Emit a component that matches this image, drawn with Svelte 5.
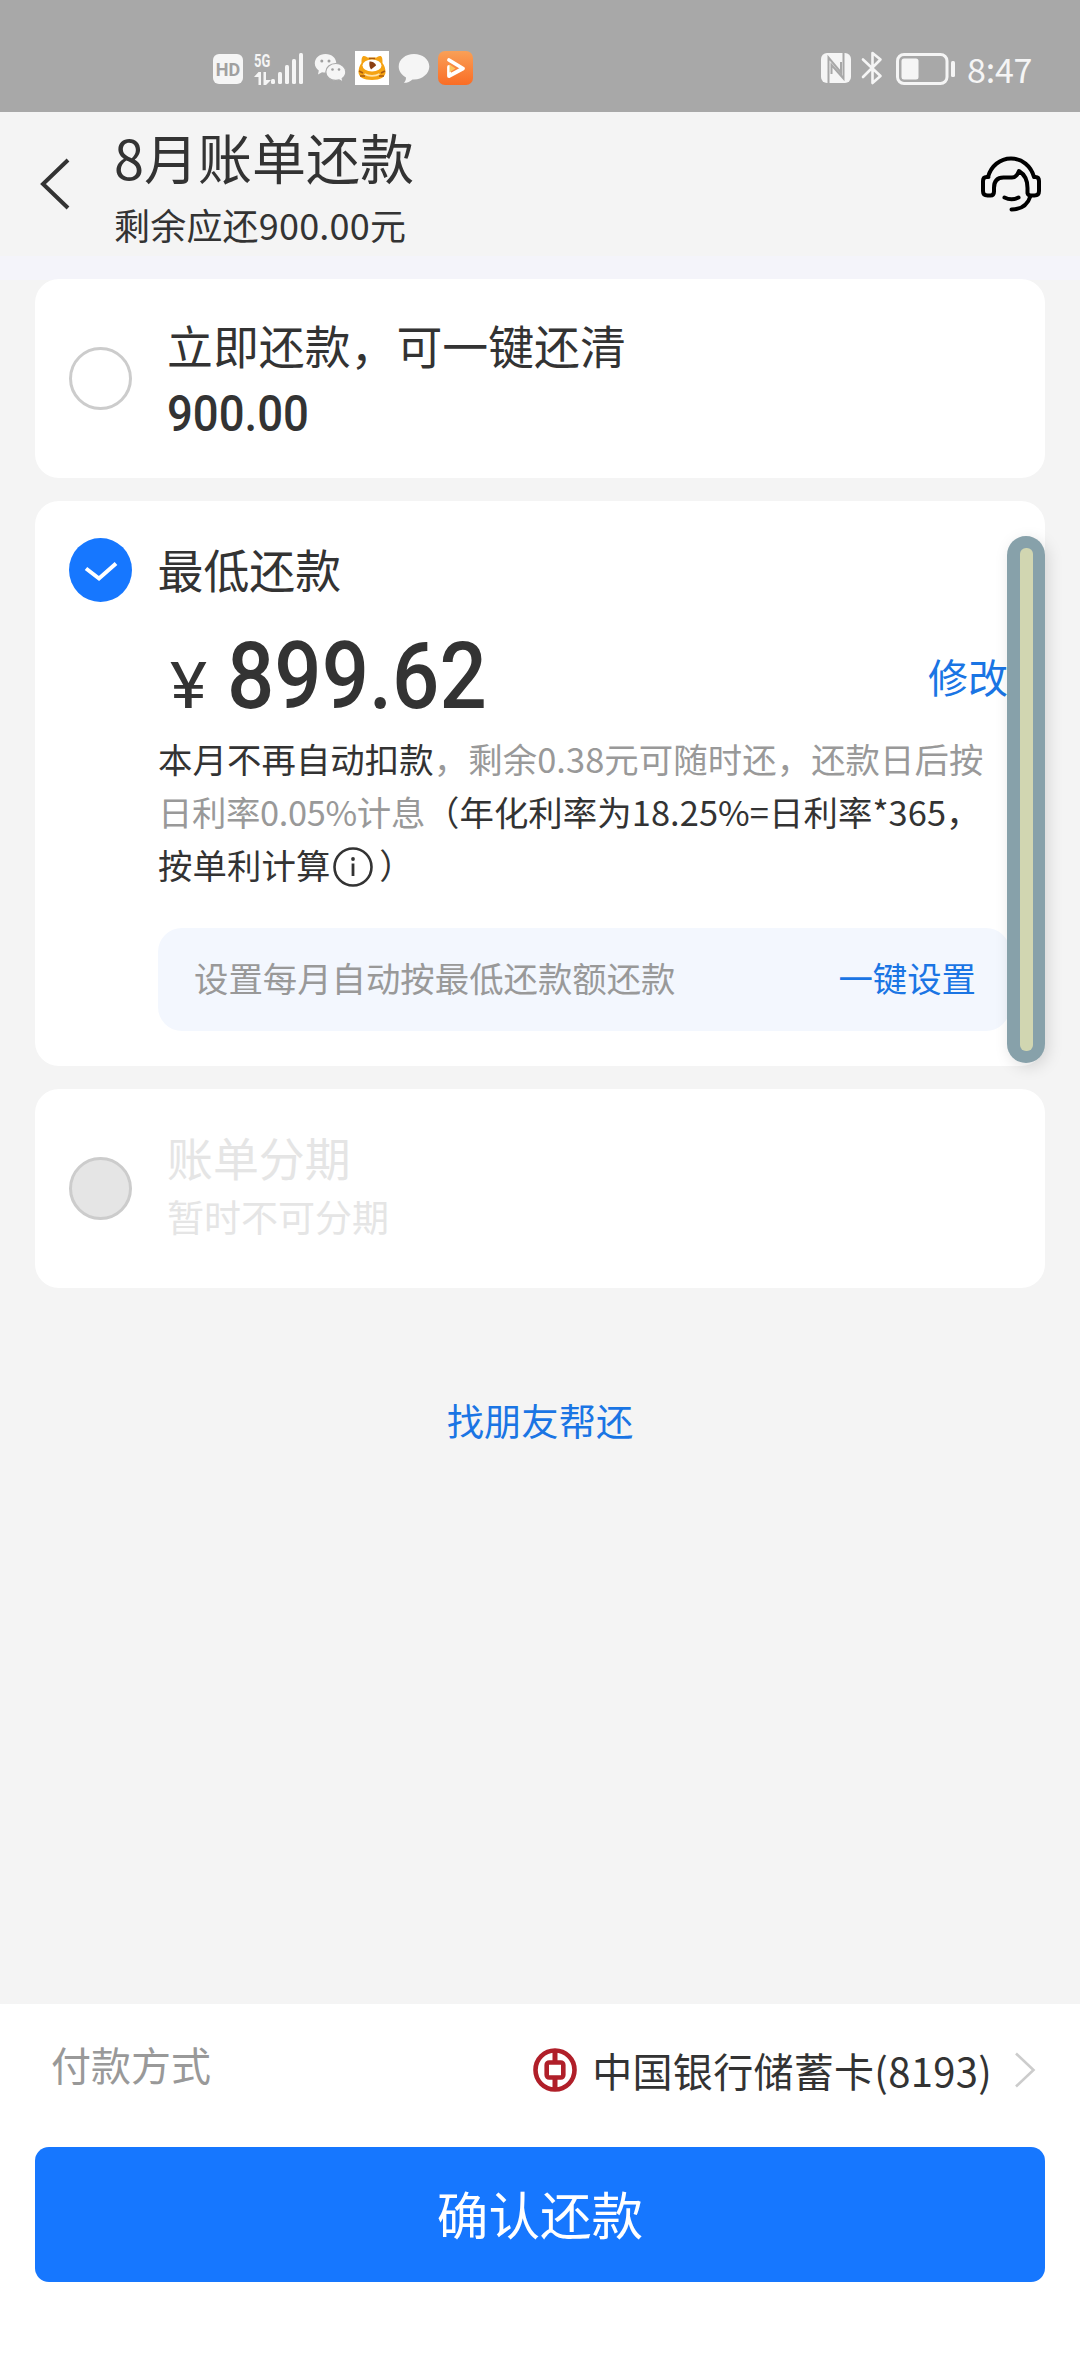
<script lang="ts">
	type Plan = 'full' | 'minimum';

	let selected = $state<Plan>('minimum');

	const bars = [5, 12, 19, 25, 31];
</script>

<svelte:head>
	<title>8月账单还款</title>
</svelte:head>

<div class="page">
	<div class="status">
		<span class="hd">HD</span>
		<div class="network">
			<span>5G</span>
			<svg width="17" height="13" viewBox="0 0 17 13" fill="#f5f5f5">
				<path d="M0 5 4.5 0H7v13H4.500V5zM9.500 0H12v8h5l-5 5H9.500z" />
			</svg>
		</div>
		<div class="bars">
			{#each bars as height}
				<i style="height: {height}px"></i>
			{/each}
		</div>
		<svg class="wechat" width="33" height="30" viewBox="0 0 33 30">
			<path
				d="M11.500 1C5.200 1 .8 5.200.8 10.300c0 3 1.500 5.500 4 7.200L4 21.500l4-2.300c1.200.3 2.300.4 3.500.4 6.300 0 10.800-4.200 10.800-9.300S17.800 1 11.500 1z"
				fill="#f5f5f5"
			/>
			<path
				d="M21.800 10.500c-5.600 0-10 3.700-10 8.400s4.400 8.400 10 8.400c1.200 0 2.300-.1 3.300-.4l4 2.100-.9-3.600c2.200-1.500 3.600-3.800 3.600-6.500 0-4.700-4.400-8.400-10-8.400z"
				fill="#f5f5f5"
				stroke="#a8a8a8"
				stroke-width="1.200"
			/>
			<circle cx="7.800" cy="8" r="1.500" fill="#a0a0a0" />
			<circle cx="15" cy="8" r="1.500" fill="#a0a0a0" />
			<circle cx="18.500" cy="16.500" r="1.300" fill="#a0a0a0" />
			<circle cx="25" cy="16.500" r="1.300" fill="#a0a0a0" />
		</svg>
		<svg class="tiger" width="34" height="34" viewBox="0 0 34 34">
			<rect width="34" height="34" fill="#fff" />
			<path
				d="M6.500 12C6.500 7 7 5 9 5c1.500 0 2.500 1 3.500 1.500h9C22.500 6 23.500 5 25 5c2 0 2.700 2.500 2.500 7 2 2.500 3 6 3 9 0 5-5 8-13.500 8S3.500 26 3.500 21c0-3 1-6.500 3-9z"
				fill="#f5a313"
			/>
			<path d="M14 7.500h6M4 20l4 2M30 20l-4 2M5 25h5M29 25h-5" stroke="#a85a10" stroke-width="1.600" />
			<ellipse cx="17" cy="14.500" rx="9.500" ry="6" fill="#fff" />
			<path d="M14.500 10.500c3 0 6 1.500 6.500 4l-5 4c-1.500-2-2-5-1.500-8z" fill="#8a3f14" />
			<path d="M9.500 23c4 2.500 11 2.500 15 0" fill="none" stroke="#ffe3a8" stroke-width="1.800" />
		</svg>
		<svg class="bubble" width="32" height="31" viewBox="0 0 32 31">
			<path
				d="M16 1C7.500 1 .7 6.500.7 13.500c0 5 3.300 8.800 7.300 10.900 0 2.300-.7 4.200-2.200 5.400 3.500 0 6.700-1.500 8.700-3.400H16c8.500 0 15.300-5.800 15.300-12.900S24.500 1 16 1z"
				fill="#f5f5f5"
			/>
		</svg>
		<svg class="video" width="35" height="34" viewBox="0 0 35 34">
			<defs>
				<linearGradient id="orange" x1="0" y1="0" x2="0" y2="1">
					<stop offset="0" stop-color="#f9a057" />
					<stop offset="1" stop-color="#fa6d25" />
				</linearGradient>
			</defs>
			<rect width="35" height="34" rx="7" fill="url(#orange)" />
			<path d="M11 16v9l14-7.500L11 9" fill="none" stroke="#fff" stroke-width="3.800" stroke-linejoin="round" stroke-linecap="round" />
			<path d="M11.500 13.500l6 4-6 4z" fill="#fbc35f" />
		</svg>

		<svg class="nfc" width="30" height="30" viewBox="0 0 30 30">
			<rect width="30" height="30" rx="6" fill="#f5f5f5" />
			<path
				d="M7.500 30V4.500L20 19.500V9M22.500 0v25.500L10.500 12v9"
				fill="none"
				stroke="#a8a8a8"
				stroke-width="2"
			/>
		</svg>
		<svg class="bluetooth" width="22" height="34" viewBox="0 0 22 34" fill="none" stroke="#f5f5f5" stroke-width="2.600" stroke-linejoin="round" stroke-linecap="round">
			<path d="M2 8.500 19.500 25 11.500 32V2l8 6.500L2 26" />
		</svg>
		<svg class="battery" width="60" height="32" viewBox="0 0 60 32">
			<rect x="1.500" y="1.500" width="49.500" height="29" rx="6.500" fill="none" stroke="#f5f5f5" stroke-width="3" />
			<rect x="5.500" y="5.500" width="17" height="21" rx="2.500" fill="#f5f5f5" />
			<rect x="55" y="8" width="4" height="16" rx="1.500" fill="#f5f5f5" />
		</svg>
		<span class="time">8:47</span>
	</div>

	<header>
		<svg class="back" width="34" height="54" viewBox="0 0 34 54" fill="none" stroke="#333" stroke-width="4">
			<path d="M31 3 6 27l25 24" />
		</svg>
		<div class="heading">
			<h1>8月账单还款</h1>
			<p>剩余应还900.00元</p>
		</div>
		<svg class="service" width="62" height="58" viewBox="0 0 62 58" fill="none" stroke="#000" stroke-width="4" stroke-linejoin="round" stroke-linecap="round">
			<path
				d="M8 22C11 11 20 3.500 31 3.500S51 11 54 22M8.500 22H6.500Q3 22 3 26v10q0 4.500 4.500 4.500h3Q14 40.500 14 36.500V33q0-10.500 9.500-10.500H32q4.500 0 7-6.500c5 3 8.500 9 8.500 17v5q.5 2.500 3.500 2.500h3.500Q59 40.500 59 36V26q0-4-3.500-4H54"
			/>
			<path d="M24.500 42.500q7 3.500 14 0" />
			<path d="M50.500 41C48 49 42 54.500 31.500 54.500" />
		</svg>
	</header>

	<main>
		<section class="card option" onclick={() => (selected = 'full')} role="presentation">
			{@render radio(selected === 'full')}
			<div class="option-text">
				<h2>立即还款，可一键还清</h2>
				<span class="number">900.00</span>
			</div>
		</section>

		<section class="card minimum" onclick={() => (selected = 'minimum')} role="presentation">
			<div class="minimum-head">
				{@render radio(selected === 'minimum')}
				<h2>最低还款</h2>
			</div>
			<div class="minimum-body">
				<div class="amount-row">
					<span class="yen">¥</span>
					<span class="amount">899.62</span>
					<a href="#edit">修改</a>
				</div>
				<p class="note">
					<span class="line">本月不再自动扣款<em>，剩余0.38元可随时还，还款日后按</em></span>
					<span class="line rate"><em>日利率0.05%计息</em>（年化利率为18.25%=日利率*365，</span>
					<span class="line">
						按单利计算<svg width="40" height="40" viewBox="0 0 40 40">
							<circle cx="20" cy="20" r="18.500" fill="none" stroke="#333" stroke-width="2.600" />
							<path d="M20 16.500V29" stroke="#333" stroke-width="2.800" />
							<circle cx="20" cy="12" r="1.900" fill="#333" />
						</svg>）
					</span>
				</p>
				<div class="auto">
					<span>设置每月自动按最低还款额还款</span>
					<a href="#auto">一键设置</a>
				</div>
			</div>
			<div class="edge-bar"><i></i></div>
		</section>

		<section class="card option disabled">
			<span class="radio"></span>
			<div class="option-text">
				<h2>账单分期</h2>
				<p>暂时不可分期</p>
			</div>
		</section>

		<a class="friend" href="#friend">找朋友帮还</a>
	</main>

	<footer>
		<div class="method">
			<span class="label">付款方式</span>
			<svg class="bank" width="44" height="44" viewBox="0 0 44 44" fill="none" stroke="#b01f29">
				<circle cx="22" cy="22" r="19.500" stroke-width="4.600" />
				<path d="M22 3v11M22 30v11" stroke-width="5" />
				<rect x="13.700" y="14.500" width="16.600" height="15" rx="2.500" stroke-width="4.600" />
			</svg>
			<span class="card-name">中国银行储蓄卡(8193)</span>
			<svg width="22" height="36" viewBox="0 0 22 36" fill="none" stroke="#ccc" stroke-width="2.600">
				<path d="M2 1.500 19.500 18 2 34.500" />
			</svg>
		</div>
		<button type="button">确认还款</button>
	</footer>
</div>

{#snippet radio(checked: boolean)}
	<span class="radio" class:checked>
		{#if checked}
			<svg width="63" height="64" viewBox="0 0 63 64" fill="none" stroke="#fff" stroke-width="4">
				<path d="M17 30.500 30 40.500 47 25.500" />
			</svg>
		{/if}
	</span>
{/snippet}

<style>
	:global(body) {
		background: #f4f4f4;
	}
	.page {
		display: flex;
		flex-direction: column;
		width: 1080px;
		height: 2376px;
		overflow: hidden;
		background: #f4f4f4;
		color: #333;
		font-family: 'Noto Sans CJK SC', sans-serif;
	}
	h1,
	h2,
	p {
		margin: 0;
		font-weight: 400;
	}
	a {
		color: #1a75e4;
		text-decoration: none;
	}
	svg {
		display: block;
		flex: none;
	}

	/* status bar */
	.status {
		display: flex;
		align-items: flex-start;
		box-sizing: border-box;
		height: 112px;
		padding: 51px 48px 0 213px;
		background: #a8a8a8;
		color: #f5f5f5;
	}
	.hd {
		width: 30px;
		height: 30px;
		margin-top: 3px;
		border-radius: 6px;
		background: #f5f5f5;
		color: #a0a0a0;
		font: 700 18px/31px Roboto, sans-serif;
		text-align: center;
	}
	.network {
		width: 17px;
		margin: 2px 0 0 11px;
	}
	.network span {
		display: block;
		height: 19px;
		font: 700 19px/15px Roboto, sans-serif;
		transform: scaleX(0.68);
		transform-origin: left;
	}
	.bars {
		display: flex;
		align-items: flex-end;
		gap: 3px;
		height: 33px;
		margin-right: 11px;
	}
	.bars i {
		width: 4px;
		border-radius: 1.5px;
		background: #f5f5f5;
	}
	.wechat {
		margin-top: 2px;
	}
	.tiger {
		margin-left: 8px;
	}
	.bubble {
		margin: 2px 0 0 9px;
	}
	.video {
		margin-left: 8px;
	}
	.nfc {
		margin: 2px 10px 0 auto;
	}
	.bluetooth {
		margin-right: 13px;
	}
	.battery {
		margin: 2px 11px 0 0;
	}
	.time {
		width: 65px;
		font-size: 34px;
		line-height: 35px;
		letter-spacing: -0.2px;
		white-space: nowrap;
	}

	header {
		display: flex;
		align-items: flex-start;
		height: 144px;
		padding: 0 38px 0 37px;
	}
	.back {
		margin-top: 45px;
	}
	.heading {
		flex: 1;
		padding: 13px 0 0 43px;
	}
	h1 {
		font-size: 54px;
		line-height: 64px;
	}
	.heading p {
		margin-top: 12.5px;
		font-size: 36px;
		line-height: 44px;
		letter-spacing: 0.2px;
	}
	.service {
		margin-top: 43px;
	}

	main {
		display: flex;
		flex-direction: column;
		flex: 1;
		gap: 23px;
		padding: 23px 35px 0;
		background: linear-gradient(#f4f4fa 24px, #f4f4f4 24px);
	}
	.card {
		box-sizing: border-box;
		border-radius: 24px;
		background: #fff;
	}
	h2 {
		font-size: 45.900px;
		line-height: 60px;
	}
	.radio {
		box-sizing: border-box;
		flex: none;
		width: 63px;
		height: 63px;
		border: 3px solid #ccc;
		border-radius: 50%;
	}
	.radio.checked {
		height: 64px;
		border: none;
		background: #1677ff;
	}
	.option {
		display: flex;
		align-items: center;
		gap: 35px;
		height: 199px;
		padding: 0 34px;
	}
	.option-text {
		display: flex;
		flex-direction: column;
		gap: 10px;
	}
	.number {
		font: 500 50px/60px Roboto, sans-serif;
		transform: scaleX(0.91);
		transform-origin: left;
	}

	.minimum {
		position: relative;
		height: 565px;
		padding: 37px 35px 0 34px;
	}
	.minimum-head {
		display: flex;
		align-items: center;
		gap: 25.5px;
		height: 64px;
	}
	.minimum-head h2 {
		padding-bottom: 5px;
	}
	.minimum-body {
		margin: 33px 0 0 89px;
	}
	.amount-row {
		display: flex;
		align-items: baseline;
		box-sizing: border-box;
		height: 80px;
		padding: 2px 2px 0 12px;
		line-height: 76px;
	}
	.yen {
		width: 57px;
		font: 400 64px/80px Roboto, sans-serif;
		transform: scaleX(1.1);
		transform-origin: left;
	}
	.amount {
		font: 500 92px/80px Roboto, sans-serif;
		transform: scaleX(0.905);
		transform-origin: left;
	}
	.amount-row a {
		align-self: center;
		margin-left: auto;
		font-size: 40px;
	}
	.note {
		margin-top: 16.5px;
		color: #333;
		font-size: 34.400px;
		line-height: 53px;
		letter-spacing: 0.08px;
	}
	.line {
		display: flex;
		height: 53px;
		white-space: nowrap;
	}
	.line em {
		color: #999;
		font-style: normal;
	}
	.rate em {
		letter-spacing: -0.35px;
	}
	.line svg {
		margin: 9px 6px 0 3px;
	}
	.auto {
		display: flex;
		align-items: center;
		justify-content: space-between;
		box-sizing: border-box;
		height: 103px;
		margin-top: 37.5px;
		padding: 0 34px 5px 36px;
		border-radius: 24px;
		background: #f3f7fe;
		color: #999;
		font-size: 34.400px;
	}
	/* system edge panel handle, floats above the card */
	.edge-bar {
		position: absolute;
		top: 35px;
		right: 0;
		box-sizing: border-box;
		width: 38px;
		height: 527px;
		padding: 12px 12.5px;
		border-radius: 19px;
		background: #87a1aa;
		box-shadow: 3px 4px 16px rgba(0, 0, 0, 0.13);
	}
	.edge-bar i {
		display: block;
		height: 100%;
		border-radius: 6px;
		background: #d1d6b1;
	}

	.disabled {
		color: #e5e5e5;
	}
	.disabled .radio {
		background: #e5e5e5;
	}
	.disabled .option-text {
		gap: 0;
		padding-bottom: 5px;
	}
	.disabled p {
		font-size: 37px;
		line-height: 60px;
	}
	.friend {
		align-self: center;
		margin-top: 84px;
		font-size: 37.300px;
		line-height: 50px;
	}

	footer {
		box-sizing: border-box;
		height: 372px;
		padding: 0 35px;
		background: #fff;
	}
	.method {
		display: flex;
		align-items: center;
		height: 132px;
		margin-bottom: 11px;
		padding: 0 9px 0 16px;
		font-size: 40px;
	}
	.label {
		margin-bottom: 12px;
		color: #999;
	}
	.bank {
		margin: 0 15px 0 auto;
	}
	.card-name {
		margin-right: 22px;
		letter-spacing: 0.3px;
	}
	button {
		display: block;
		width: 100%;
		height: 135px;
		padding: 0 0 5px;
		border: none;
		border-radius: 14px;
		background: #1677ff;
		color: #fff;
		font-family: inherit;
		font-size: 51.600px;
	}
</style>
